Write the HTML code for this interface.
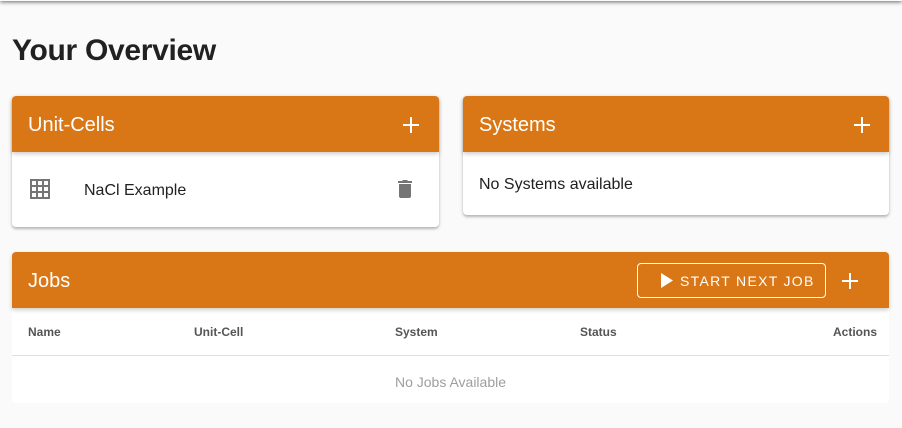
<!DOCTYPE html>
<html><head><meta charset="utf-8"><style>
*{box-sizing:border-box;margin:0;padding:0}
body{width:902px;height:428px;background:#fafafa;font-family:"Liberation Sans",Roboto,sans-serif;position:relative;overflow:hidden;color:#212121}
.topbar{position:absolute;left:0;top:-4px;width:902px;height:5px;background:#fafafa;box-shadow:0 1px 4px rgba(0,0,0,.6)}
h1{position:absolute;left:12px;top:34px;font-size:30px;font-weight:bold;color:#212121;letter-spacing:-0.3px}
.card{position:absolute;background:#fff;border-radius:4px;box-shadow:0 2px 2px rgba(0,0,0,.2),0 1px 5px rgba(0,0,0,.12)}
.hdr{position:absolute;left:0;top:0;right:0;height:56px;background:#d97716;border-radius:4px 4px 0 0;color:#fff;font-size:20px;line-height:58px;padding-left:16px;box-shadow:0 2px 4px rgba(0,0,0,.2)}
.plus{position:absolute;width:16px;height:16px}
.plus:before,.plus:after{content:"";position:absolute;background:#fff}
.plus:before{left:7px;top:0;width:2px;height:16px}
.plus:after{top:7px;left:0;height:2px;width:16px}
.th{position:absolute;top:325px;font-size:12px;font-weight:bold;color:#555}
</style></head><body>
<div class="topbar"></div>
<h1>Your Overview</h1>

<div class="card" style="left:12px;top:96px;width:427px;height:131px">
  <div class="hdr">Unit-Cells<div class="plus" style="left:391px;top:21px"></div></div>
  <svg style="position:absolute;left:18px;top:83px" width="20" height="20" viewBox="0 0 20 20"><g fill="none" stroke="#757575" stroke-width="2"><rect x="1" y="1" width="18" height="18"/><path d="M7 1v18M13 1v18M1 7h18M1 13h18"/></g></svg>
  <div style="position:absolute;left:72px;top:86px;font-size:16px">NaCl Example</div>
  <svg style="position:absolute;left:386px;top:84px" width="14" height="18" viewBox="0 0 14 18"><path fill="#757575" d="M1 4h12v12a2 2 0 0 1-2 2H3a2 2 0 0 1-2-2zM0 1h4l1-1h4l1 1h4v2H0z"/></svg>
</div>

<div class="card" style="left:463px;top:96px;width:426px;height:119px">
  <div class="hdr">Systems<div class="plus" style="left:391px;top:21px"></div></div>
  <div style="position:absolute;left:16px;top:80px;font-size:16px">No Systems available</div>
</div>

<div class="card" style="left:12px;top:252px;width:877px;height:151px;border-radius:4px;box-shadow:none">
  <div class="hdr">Jobs
    <div style="position:absolute;left:625px;top:11px;width:189px;height:35px;border:1px solid #fff;border-radius:4px;font-size:14px;line-height:35px;letter-spacing:1.3px;padding-left:42px;white-space:nowrap">START NEXT JOB</div>
    <svg style="position:absolute;left:649px;top:21px" width="12" height="15" viewBox="0 0 12 15"><path fill="#fff" d="M0 0l12 7.5L0 15z"/></svg>
    <div class="plus" style="left:830px;top:21px"></div>
  </div>
  <div style="position:absolute;left:0;right:0;top:103px;height:1px;background:#e0e0e0"></div>
  <div style="position:absolute;left:0;right:0;top:122px;text-align:center;font-size:14px;color:#9e9e9e">No Jobs Available</div>
</div>
<div class="th" style="left:28px">Name</div>
<div class="th" style="left:194px">Unit-Cell</div>
<div class="th" style="left:395px">System</div>
<div class="th" style="left:580px">Status</div>
<div class="th" style="left:833px">Actions</div>
</body></html>
